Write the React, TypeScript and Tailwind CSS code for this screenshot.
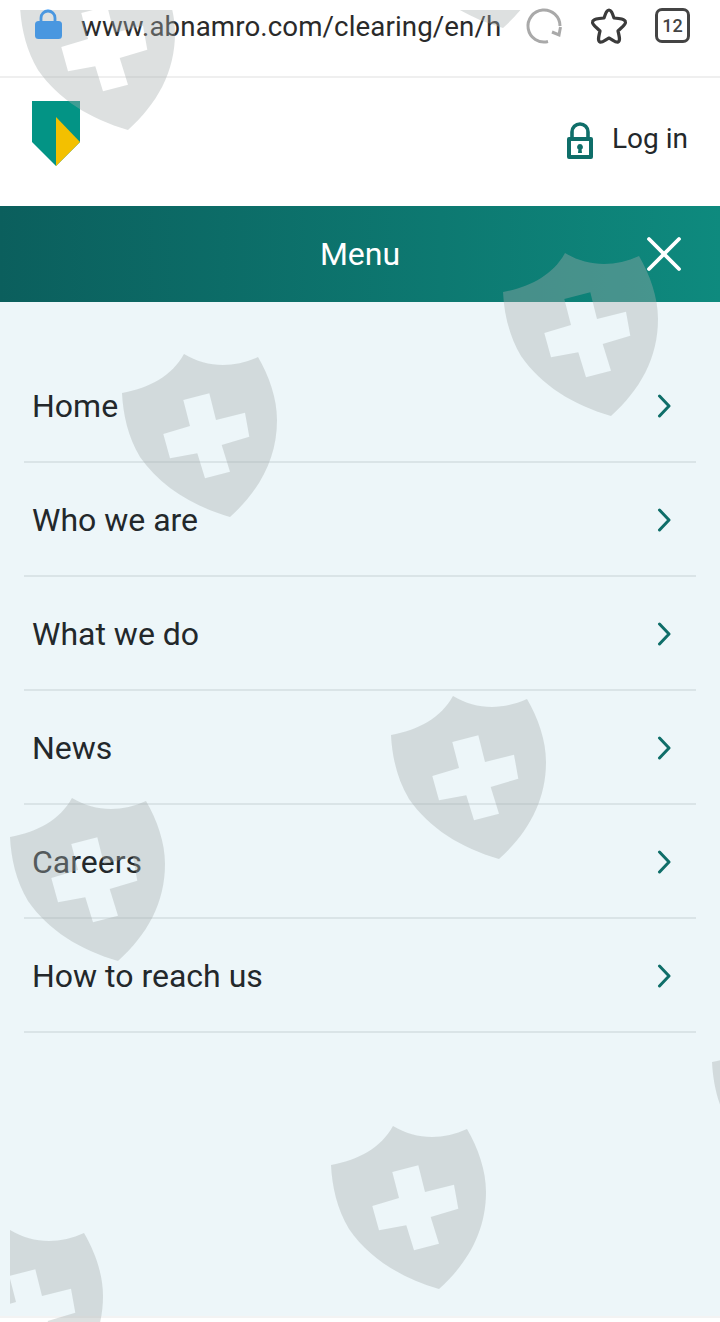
import React from "react";

const menuItems = ["Home", "Who we are", "What we do", "News", "Careers", "How to reach us"];

// watermark positions, top left of each shield
const shields = [
  { x: 20, y: -33 },
  { x: 395, y: -135 },
  { x: 503, y: 253 },
  { x: 122, y: 354 },
  { x: 391, y: 696 },
  { x: 10, y: 798 },
  { x: 712, y: 1023 },
  { x: 331, y: 1126 },
  { x: -52, y: 1230 },
];

function Shield({ x, y }: { x: number; y: number }) {
  return (
    <svg
      className="absolute"
      style={{ left: x - 10, top: y - 10 }}
      width="156"
      height="165"
      viewBox="0 0 156 165"
    >
      <path
        fillRule="evenodd"
        fill="rgb(166,174,174)"
        fillOpacity="0.38"
        d="M0 39 C27 34 50 22 62 0 C85 14 112 14 136 3 C147 22 155 44 155 66 C155 105 137 137 108 163 C70 152 38 132 18 103 C6 83 1 60 0 39 Z
           M61.3 46 L87.3 39.3 L94 66 L123 58.7 L127.3 82.7 L99.7 91 L108 117.7 L83 124.3 L75.3 99.3 L48 104.3 L41.3 80 L68 72 Z"
      />
    </svg>
  );
}

function Chevron() {
  return (
    <svg width="14" height="24" viewBox="0 0 14 24" fill="none" className="mr-[25px]">
      <path d="M2.5 2 L12 12 L2.5 22" stroke="#0f6e69" strokeWidth="3" strokeLinecap="round" strokeLinejoin="round" />
    </svg>
  );
}

export default function App() {
  return (
    <div className="relative w-[720px] h-[1322px] overflow-hidden bg-white font-['Roboto',sans-serif] text-[#23282b]">
      {/* BROWSER BAR */}
      <div className="h-[78px] border-b-2 border-[#efefef] flex items-start">
        <svg width="30" height="32" viewBox="0 0 30 32" className="ml-[33px] mt-[9px] shrink-0">
          <path d="M8 14 V9 a7 7 0 0 1 14 0 V14" fill="none" stroke="#1189ff" strokeWidth="2.8" />
          <rect x="2" y="12" width="27" height="18" rx="3.5" fill="#1189ff" />
        </svg>
        <div className="ml-[18px] mt-[9px] w-[420px] whitespace-nowrap text-[27.7px] leading-[36px] text-[#2a2a2a] tracking-[0.1px]">
          www.abnamro.com/clearing/en/h
        </div>
        <svg width="38" height="38" viewBox="0 0 38 38" fill="none" className="ml-[24px] mt-[7px] shrink-0">
          <path d="M23 34.5 A16 16 0 1 1 35 19" stroke="#a9a9a9" strokeWidth="3" />
          <path d="M35.5 20 L34 28 L27 25" stroke="#a9a9a9" strokeWidth="3" />
        </svg>
        <svg width="40" height="38" viewBox="0 0 40 38" fill="none" className="ml-[26px] mt-[7px] shrink-0">
          <path
            d="M20 3 C22 3 23 5 25 11 C31 11.5 36 12 36.5 15 C37 17.5 33 20 29 24 C30.5 30 31.5 34 29 35 C27 36 24 33 20 31 C16 33 13 36 11 35 C8.5 34 9.5 30 11 24 C7 20 3 17.5 3.5 15 C4 12 9 11.5 15 11 C17 5 18 3 20 3 Z"
            stroke="#3b3b3b"
            strokeWidth="3.2"
            strokeLinejoin="round"
          />
        </svg>
        <div className="ml-[26px] mt-[8px] w-[35px] h-[35px] border-[3px] border-[#444] rounded-[7px] flex items-center justify-center text-[18px] leading-none font-medium text-[#444]">
          12
        </div>
      </div>

      {/* SITE HEADER */}
      <div className="h-[128px] flex justify-between">
        <svg width="48" height="65" viewBox="0 0 48 65" className="ml-[32px] mt-[23px]">
          <path d="M0 0 H48 V41 L24 65 L0 41 Z" fill="#039485" />
          <path d="M24 16 L48 41 L24 65 Z" fill="#f3c000" />
        </svg>
        <div className="flex items-center mr-[32px] mt-[-6px]">
          <svg width="28" height="38" viewBox="0 0 28 38" className="mr-[18px] mt-[4px]">
            <path d="M6 18 V10 a8 8 0 0 1 16 0 V18" fill="none" stroke="#0f6e69" strokeWidth="3.6" />
            <path
              fillRule="evenodd"
              fill="#0f6e69"
              d="M3 15 H25 a2 2 0 0 1 2 2 V35 a2 2 0 0 1 -2 2 H3 a2 2 0 0 1 -2 -2 V17 a2 2 0 0 1 2 -2 Z M5 19 V33 H23 V19 Z"
            />
            <path d="M14 22 a3 3 0 0 1 1.6 5.5 L16 31 H12 L12.4 27.5 A3 3 0 0 1 14 22 Z" fill="#0f6e69" />
          </svg>
          <span className="text-[28px] leading-[36px]">Log in</span>
        </div>
      </div>

      {/* MENU TITLE */}
      <div className="relative h-[96px] bg-gradient-to-r from-[#0b5f5d] to-[#0e8a7e] flex items-center justify-center">
        <span className="text-[32px] leading-[36px] text-white">Menu</span>
        <svg width="36" height="36" viewBox="0 0 36 36" className="absolute right-[38px] top-[30px]">
          <path d="M3 3 L33 33 M33 3 L3 33" stroke="white" strokeWidth="3.8" strokeLinecap="round" />
        </svg>
      </div>

      {/* MENU LIST */}
      <div className="h-[1014px] bg-[#edf6f9] pt-[47px] px-[24px]">
        {menuItems.map((item) => (
          <div key={item} className="h-[114px] border-b-2 border-[#dae4e7] flex items-center justify-between pl-[8px] pt-[2px]">
            <span className="text-[32px] leading-[40px]">{item}</span>
            <Chevron />
          </div>
        ))}
      </div>
      <div className="h-[6px] border-t-2 border-[#f3f3f3]" />

      {/* WATERMARKS */}
      <div className="absolute left-[10px] right-0 top-[10px] bottom-0 overflow-hidden pointer-events-none">
        {shields.map((s) => (
          <Shield key={`${s.x}-${s.y}`} x={s.x} y={s.y} />
        ))}
      </div>
    </div>
  );
}
